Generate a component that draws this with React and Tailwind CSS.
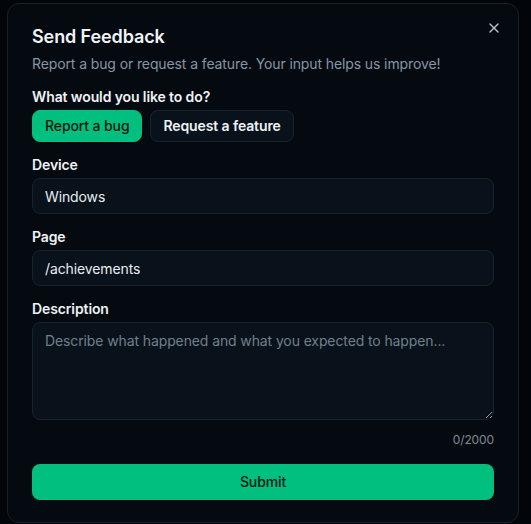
import { useState } from "react"
import { X } from "lucide-react"

function Field({ label, children }) {
  return (
    <div className="flex flex-col gap-1.5">
      <label className="text-sm font-semibold leading-none text-[#eef2f4]">{label}</label>
      {children}
    </div>
  )
}

export default function App() {
  const [mode, setMode] = useState("bug")
  const [device, setDevice] = useState("Windows")
  const [page, setPage] = useState("/achievements")
  const [description, setDescription] = useState("")

  const inputClass =
    "h-9 w-full rounded-lg border border-[#18232d] bg-[#09111a] px-3 text-sm text-[#e8edf0] outline-none"

  return (
    <div className="h-[524px] w-[531px] overflow-hidden bg-[#020509] font-['Inter',sans-serif] tracking-[-0.007em]">
      <div className="relative ml-[7px] mt-[3px] flex w-[512px] flex-col rounded-xl border border-[#16212b] bg-[#050a11] px-6 pt-6 pb-[22px]">
        <button className="absolute right-4 top-4 text-[#b8c0c6]">
          <X className="h-4 w-4" strokeWidth={2} />
        </button>

        <h2 className="text-lg font-semibold leading-none text-[#f1f4f6]">Send Feedback</h2>
        <p className="mt-2 text-sm leading-5 text-[#8596a3]">
          Report a bug or request a feature. Your input helps us improve!
        </p>

        <div className="mt-4 flex flex-col gap-4">
          <Field label="What would you like to do?">
            <div className="flex gap-2">
              <button
                onClick={() => setMode("bug")}
                className={
                  mode === "bug"
                    ? "h-8 rounded-lg border border-[#00bf7f] bg-[#00bf7f] px-3 text-sm font-medium text-[#05150f]"
                    : "h-8 rounded-lg border border-[#18232d] bg-[#09111a] px-3 text-sm font-semibold text-[#eef2f4]"
                }
              >
                Report a bug
              </button>
              <button
                onClick={() => setMode("feature")}
                className={
                  mode === "feature"
                    ? "h-8 rounded-lg border border-[#00bf7f] bg-[#00bf7f] px-3 text-sm font-medium text-[#05150f]"
                    : "h-8 rounded-lg border border-[#18232d] bg-[#09111a] px-3 text-sm font-semibold text-[#eef2f4]"
                }
              >
                Request a feature
              </button>
            </div>
          </Field>

          <Field label="Device">
            <input className={inputClass} value={device} onChange={(e) => setDevice(e.target.value)} />
          </Field>

          <Field label="Page">
            <input className={inputClass} value={page} onChange={(e) => setPage(e.target.value)} />
          </Field>

          <div className="flex flex-col">
            <Field label="Description">
              <textarea
                className="h-[98px] w-full rounded-lg border border-[#18232d] bg-[#09111a] px-3 py-2 text-sm leading-5 text-[#e8edf0] outline-none placeholder:text-[#6f808c]"
                placeholder="Describe what happened and what you expected to happen..."
                value={description}
                maxLength={2000}
                onChange={(e) => setDescription(e.target.value)}
              />
            </Field>
            <div className="mt-3 text-right text-xs leading-4 text-[#7d8b95]">
              {description.length}/2000
            </div>
          </div>

          <button className="h-9 w-full rounded-lg bg-[#00bf7f] text-sm font-medium text-[#05150f]">
            Submit
          </button>
        </div>
      </div>
    </div>
  )
}
